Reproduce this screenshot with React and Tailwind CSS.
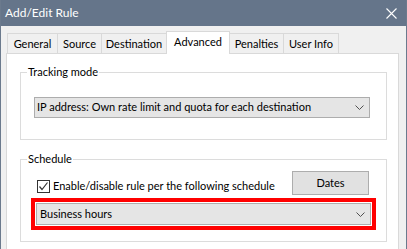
import React from 'react';

const tabs = [
  { label: 'General', w: 'w-[51px]' },
  { label: 'Source', w: 'w-[45px]' },
  { label: 'Destination', w: 'w-[66px]' },
  { label: 'Advanced', w: 'w-[64px]', active: true },
  { label: 'Penalties', w: 'w-[55px]' },
  { label: 'User Info', w: 'w-[56px]' },
];

function Chevron() {
  return (
    <svg width="9" height="5" viewBox="0 0 9 5" className="shrink-0">
      <path d="M0.5 0.5 L4.5 4.5 L8.5 0.5" fill="none" stroke="#505050" strokeWidth="1" />
    </svg>
  );
}

function Dropdown({ text, className }) {
  return (
    <div className={`flex items-center justify-between border border-[#adadad] bg-[#e5e5e5] pl-[2px] pr-[5px] ${className}`}>
      <span className="whitespace-nowrap">{text}</span>
      <Chevron />
    </div>
  );
}

function Group({ label, className, children }) {
  return (
    <div className={`relative border border-[#dcdcdc] ${className}`}>
      <span className="absolute -top-[9px] left-[6px] bg-white px-[1px] leading-[16px]">{label}</span>
      {children}
    </div>
  );
}

export default function App() {
  return (
    <div className="w-[407px] h-[249px] overflow-hidden bg-[#f0f0f0] border-x border-[#6b7a8d] text-[11px] text-black font-['Lato',sans-serif]">
      {/* Title bar */}
      <div className="h-[26px] bg-[#65758a] flex items-center justify-between pl-[4px] pr-[9px]">
        <span className="text-white text-[12px] leading-none">Add/Edit Rule</span>
        <svg width="11" height="11" viewBox="0 0 11 11">
          <path d="M0.5 0.5 L10.5 10.5 M10.5 0.5 L0.5 10.5" stroke="#ffffff" strokeWidth="1.1" />
        </svg>
      </div>

      <div className="pt-[4px] pl-[5px] pr-[7px]">
        {/* Tabs */}
        <div className="flex items-end h-[23px] pl-[1px]">
          {tabs.map((t, i) => (
            <div
              key={t.label}
              className={`${t.w} ${i > 0 ? '-ml-px' : ''} flex justify-center border-t border-x border-[#d9d9d9] leading-[16px] ${
                t.active
                  ? 'h-[23px] -mb-px relative z-10 bg-white pt-[2px]'
                  : 'h-[20px] bg-[#f0f0f0] pt-[2px]'
              }`}
            >
              {t.label}
            </div>
          ))}
        </div>

        {/* Panel */}
        <div className="border border-[#d9d9d9] bg-white pl-[13px] pr-[11px] pt-[18px] h-[220px]">
          <Group label="Tracking mode" className="pt-[24px] pb-[21px]">
            <Dropdown
              text="IP address: Own rate limit and quota for each destination"
              className="ml-[13px] w-[336px] h-[21px]"
            />
          </Group>

          <Group label="Schedule" className="mt-[19px] pt-[11px] pb-[11px]">
            <div className="flex items-end pl-[16px] pr-[17px]">
              <div className="flex items-center mb-[1px]">
                <div className="w-[13px] h-[13px] border border-[#333333] bg-white flex items-center justify-center">
                  <svg width="11" height="11" viewBox="0 0 11 11">
                    <path d="M1.5 5.5 L4 8.5 L9.5 1.5" fill="none" stroke="#333333" strokeWidth="1.2" />
                  </svg>
                </div>
                <span className="ml-[3px] leading-[16px] whitespace-nowrap">
                  Enable/disable rule per the following schedule
                </span>
              </div>
              <div className="ml-auto w-[77px] h-[24px] border border-[#adadad] bg-[#e1e1e1] flex items-center justify-center">
                Dates
              </div>
            </div>
            <div className="mt-[3px] ml-[10px] w-[345px] border-4 border-[#ff0000] p-[1px]">
              <Dropdown text="Business hours" className="h-[22px] pl-[3px] bg-[#e1e1e1]" />
            </div>
          </Group>
        </div>
      </div>
    </div>
  );
}
